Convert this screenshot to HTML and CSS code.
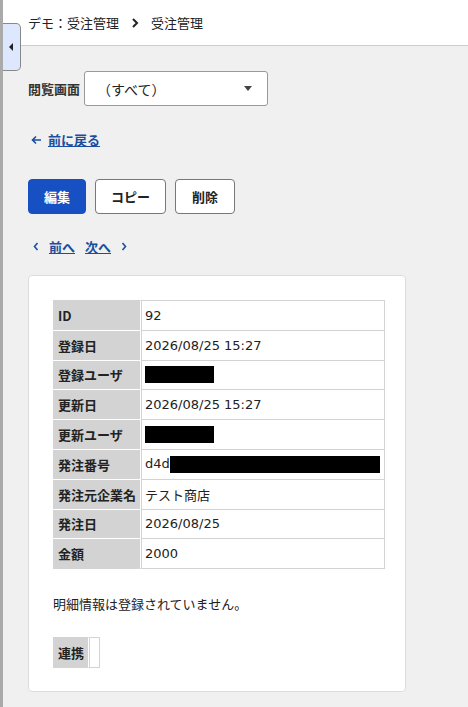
FILE: index.html
```html
<!DOCTYPE html>
<html lang="ja">
<head>
  <meta charset="UTF-8">
  <meta name="viewport" content="width=device-width, initial-scale=1.0">
  <title>受注管理</title>
  <link rel="stylesheet" href="styles.css">
</head>
<body>
  <div class="page">
    <button class="side-toggle" type="button" aria-label="メニュー">
      <svg width="5" height="8" viewBox="0 0 5 8"><path d="M4 0 L0 4 L4 8 Z" fill="#222"/></svg>
    </button>

    <header class="topbar">
      <span>デモ：受注管理</span>
      <svg class="crumb-sep" width="8" height="10" viewBox="0 0 8 10"><path d="M2 1 L6 5 L2 9" fill="none" stroke="#222" stroke-width="2"/></svg>
      <span>受注管理</span>
    </header>

    <main class="content">
      <div class="view-row">
        <label for="view">閲覧画面</label>
        <div class="select">
          <span>（すべて）</span>
          <svg width="8" height="5" viewBox="0 0 8 5"><path d="M0 0 H8 L4 5 Z" fill="#444"/></svg>
        </div>
      </div>

      <a href="#" class="back">
        <svg width="11" height="10" viewBox="0 0 11 10"><path d="M10 5 H2 M5 1.5 L1.5 5 L5 8.5" fill="none" stroke="#1a4e9e" stroke-width="1.6"/></svg>
        <span>前に戻る</span>
      </a>

      <div class="actions">
        <button class="btn btn-primary" type="button">編集</button>
        <button class="btn" type="button">コピー</button>
        <button class="btn" type="button">削除</button>
      </div>

      <div class="pager">
        <svg width="6" height="9" viewBox="0 0 6 9"><path d="M4.5 1 L1.5 4.5 L4.5 8" fill="none" stroke="#1a4e9e" stroke-width="1.6"/></svg>
        <a href="#">前へ</a>
        <a href="#">次へ</a>
        <svg width="6" height="9" viewBox="0 0 6 9"><path d="M1.5 1 L4.5 4.5 L1.5 8" fill="none" stroke="#1a4e9e" stroke-width="1.6"/></svg>
      </div>

      <section class="card">
        <table class="detail">
          <tr><th>ID</th><td>92</td></tr>
          <tr><th>登録日</th><td>2026/08/25 15:27</td></tr>
          <tr><th>登録ユーザ</th><td><span class="masked"></span></td></tr>
          <tr><th>更新日</th><td>2026/08/25 15:27</td></tr>
          <tr><th>更新ユーザ</th><td><span class="masked"></span></td></tr>
          <tr><th>発注番号</th><td>d4d<span class="masked masked-wide"></span></td></tr>
          <tr><th>発注元企業名</th><td>テスト商店</td></tr>
          <tr><th>発注日</th><td>2026/08/25</td></tr>
          <tr><th>金額</th><td>2000</td></tr>
        </table>

        <p class="note">明細情報は登録されていません。</p>

        <table class="detail link-table">
          <tr><th>連携</th><td></td></tr>
        </table>
      </section>
    </main>
  </div>
</body>
</html>
```

FILE: styles.css
```css
html, body {
  margin: 0;
  padding: 0;
}

body {
  font-family: "Noto Sans CJK JP", "Noto Sans", sans-serif;
  font-size: 13px;
  color: #222;
  background-color: #f0f0f0;
}

.page {
  position: relative;
  min-height: 707px;
  border-left: 3px solid #aaa;
}

.side-toggle {
  position: absolute;
  top: 23px;
  left: 0;
  width: 18px;
  height: 48px;
  padding: 0;
  background-color: #dde8ff;
  border: 1px solid #888;
  border-left: none;
  border-radius: 0 5px 5px 0;
  display: flex;
  align-items: center;
  justify-content: center;
  cursor: pointer;
}

.topbar {
  height: 46px;
  background-color: #fff;
  border-bottom: 1px solid #ccc;
  display: flex;
  align-items: center;
  gap: 9px;
  padding-left: 25px;
  box-sizing: border-box;
}

.topbar span:first-child {
  margin-right: 3px;
}

.crumb-sep {
  margin-right: 3px;
}

.content {
  padding: 25px 25px 15px;
}

.view-row {
  display: flex;
  align-items: center;
  gap: 4px;
}

.view-row label {
  font-weight: bold;
  color: #333;
}

.select {
  width: 184px;
  height: 35px;
  box-sizing: border-box;
  background-color: #fff;
  border: 1px solid #999;
  border-radius: 3px;
  display: flex;
  align-items: center;
  justify-content: space-between;
  padding: 0 15px 0 12px;
  font-size: 14px;
}

.back {
  display: inline-flex;
  align-items: center;
  gap: 6px;
  margin: 24px 0 0 3px;
  color: #1a4e9e;
  font-weight: bold;
  text-decoration: underline;
}

.actions {
  display: flex;
  gap: 9px;
  margin-top: 30px;
}

.btn {
  min-width: 58px;
  height: 35px;
  padding: 0 15px;
  font-family: inherit;
  font-size: 13px;
  font-weight: bold;
  color: #222;
  background-color: #fff;
  border: 1px solid #777;
  border-radius: 4px;
  cursor: pointer;
}

.btn:last-child {
  min-width: 60px;
}

.btn-primary {
  background-color: #1650c2;
  border-color: #1650c2;
  color: #fff;
}

.pager {
  display: flex;
  align-items: center;
  gap: 10px;
  margin: 23px 0 0 5px;
}

.pager a {
  color: #1a4e9e;
  font-weight: bold;
  text-decoration: underline;
}

.card {
  margin-top: 19px;
  width: 378px;
  box-sizing: border-box;
  background-color: #fff;
  border: 1px solid #ddd;
  border-radius: 4px;
  padding: 24px 24px 23px;
}

.detail {
  width: 100%;
  border-collapse: separate;
  border-spacing: 0;
}

.detail th,
.detail td {
  height: 28.8px;
  padding: 0 4px 0 5px;
  text-align: left;
  white-space: nowrap;
}

.detail th {
  width: 77px;
  background-color: #d3d3d3;
  border-bottom: 1px solid #fff;
  border-right: 1px solid #fff;
  font-weight: bold;
  color: #222;
}

.detail tr:first-child th {
  border-top: 1px solid #d3d3d3;
}

.detail tr:last-child th {
  border-bottom-color: #d3d3d3;
}

.detail td {
  padding-left: 3px;
  font-family: "DejaVu Sans", "Noto Sans CJK JP", sans-serif;
  border-right: 1px solid #d3d3d3;
  border-bottom: 1px solid #d3d3d3;
  border-left: 1px solid #d3d3d3;
}

.detail tr:first-child td {
  border-top: 1px solid #d3d3d3;
}

.masked {
  display: inline-block;
  vertical-align: middle;
  width: 69px;
  height: 17px;
  background-color: #000;
}

.masked-wide {
  width: 210px;
}

.note {
  margin: 25px 0 24px;
}

.link-table {
  width: auto;
}

.link-table th {
  width: auto;
  height: 28px;
}

.link-table td {
  width: 2px;
}
```
